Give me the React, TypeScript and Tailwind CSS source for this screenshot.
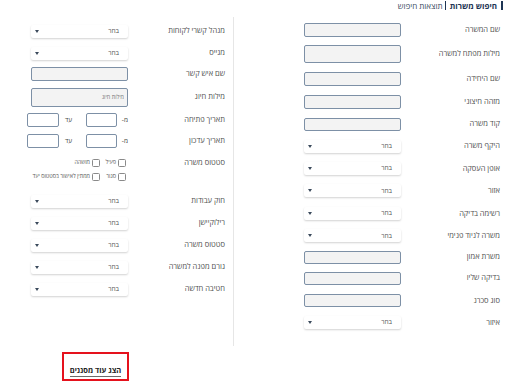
import React from 'react';

const font = { fontFamily: '"Open Sans", "Liberation Sans", "DejaVu Sans", sans-serif' };

function Field({ h = 14, placeholder }: { h?: number; placeholder?: string }) {
  return (
    <input
      readOnly
      placeholder={placeholder}
      style={{ height: h }}
      className="w-[97px] bg-[#f3f3f3] border border-[#7d90a6] rounded-[2px] px-[3px] text-[5.5px] placeholder:text-[#777] outline-none"
    />
  );
}

function Select() {
  return (
    <div className="w-[97px] h-[13px] bg-white rounded-[2px] shadow-[0_1px_2px_rgba(0,0,0,0.18)] flex items-center justify-between pr-[9px] pl-[4px]">
      <span className="text-[6.5px] text-[#555] leading-none">בחר</span>
      <svg width="4" height="3" viewBox="0 0 4 3"><path d="M0 0h4L2 3z" fill="#3b4a5c" /></svg>
    </div>
  );
}

function Row({ label, h = 22.5, children }: { label: string; h?: number; children: React.ReactNode }) {
  return (
    <div className="flex items-center" style={{ height: h }}>
      <div className="w-[99px] text-[7.5px] text-[#4f4f4f] leading-none whitespace-nowrap">{label}</div>
      {children}
    </div>
  );
}

function LRow({ label, h = 22, children }: { label: string; h?: number; children: React.ReactNode }) {
  return (
    <div className="flex items-center" style={{ height: h }}>
      <div className="w-[97px] text-[7.5px] text-[#4f4f4f] leading-none whitespace-nowrap">{label}</div>
      {children}
    </div>
  );
}

function DateRange() {
  return (
    <div className="flex items-center">
      <span className="w-[8px] text-[6.5px] text-[#444]">מ-</span>
      <input readOnly className="mr-[3px] w-[31px] h-[14px] bg-white border border-[#7d90a6] rounded-[2px]" />
      <span className="mr-[14px] w-[9px] text-[6.5px] text-[#444]">עד</span>
      <input readOnly className="mr-[4px] w-[32px] h-[14px] bg-white border border-[#7d90a6] rounded-[2px]" />
    </div>
  );
}

function Check({ label, w }: { label: string; w?: number }) {
  return (
    <div className="flex items-center gap-[2px]" style={w ? { width: w } : undefined}>
      <span className="w-[8px] h-[8px] border border-[#8a8a8a] rounded-[1.5px] bg-white shrink-0" />
      <span className="text-[5.5px] text-[#555] leading-none whitespace-nowrap">{label}</span>
    </div>
  );
}

export default function App() {
  return (
    <div dir="rtl" style={font} className="w-[508px] h-[386px] bg-white overflow-hidden">
      <div className="h-[17px] flex items-start pr-[5px] pt-[1px]">
        <div className="border-r-2 border-[#1e3554] pr-[4px] text-[8px] font-bold text-[#1e3554] leading-[9px]">חיפוש משרות</div>
        <div className="mr-[4px] border-r border-[#1e3554] pr-[2px] text-[8px] text-[#3a4a5e] leading-[9px]">תוצאות חיפוש</div>
      </div>

      <div className="flex">
        <div className="w-[275px] border-l border-[#e6e6e6] pr-[8px] pt-[3px] pb-[12px]">
          <Row label="שם המשרה" h={20}><Field /></Row>
          <Row label="מילות מפתח למשרה" h={27}><Field h={18} /></Row>
          <Row label="שם היחידה" h={24}><Field /></Row>
          <Row label="מזהה חיצוני" h={22}><Field /></Row>
          <Row label="קוד משרה" h={22}><Field h={13} /></Row>
          <Row label="היקף משרה" h={22}><Select /></Row>
          <Row label="אופן העסקה"><Select /></Row>
          <Row label="אזור"><Select /></Row>
          <Row label="רשימה בדיקה"><Select /></Row>
          <Row label="משרה לניוד פנימי"><Select /></Row>
          <Row label="משרת אמון" h={20}><Field h={13} /></Row>
          <Row label="בדיקה שליו" h={22}><Field h={13} /></Row>
          <Row label="סוג סכרנ"><Field h={13} /></Row>
          <Row label="איזור" h={22}><Select /></Row>
        </div>

        <div className="flex-1 pr-[8px] pt-[3px]">
          <LRow label="מנהל קשרי לקוחות"><Select /></LRow>
          <LRow label="מגייס"><Select /></LRow>
          <LRow label="שם איש קשר" h={20}><Field /></LRow>
          <LRow label="מילות חיוג" h={26}><Field h={19} placeholder="מילות חיוג" /></LRow>
          <LRow label="תאריך פתיחה" h={20}><DateRange /></LRow>
          <LRow label="תאריך עדכון" h={22}><DateRange /></LRow>
          <div className="flex h-[38px] pt-[4px]">
            <div className="w-[97px] h-[14px] flex items-center text-[7.5px] text-[#4f4f4f] leading-none">סטטוס משרה</div>
            <div className="pr-[2px]">
              <div className="h-[14px] flex items-center">
                <Check label="פעיל" w={26} />
                <Check label="מושהה" />
              </div>
              <div className="h-[14px] flex items-center">
                <Check label="סגור" w={26} />
                <Check label="ממתין לאישור בסטטוס יעד" />
              </div>
            </div>
          </div>
          <LRow label="חוק עבודות"><Select /></LRow>
          <LRow label="רילוקיישן"><Select /></LRow>
          <LRow label="סטטוס משרה"><Select /></LRow>
          <LRow label="גורם מפנה למשרה"><Select /></LRow>
          <LRow label="חטיבה חדשה"><Select /></LRow>
        </div>
      </div>

      <div dir="ltr" className="pl-[62px] pt-[6px]">
        <div className="w-[67px] h-[29px] border-2 border-[#e5121d] flex justify-center pt-[12px]">
          <span dir="rtl" className="text-[7.5px] font-bold text-[#222] leading-[9px] h-[11px] border-b-[1.5px] border-[#6b6b6b]">הצג עוד מסננים</span>
        </div>
      </div>
    </div>
  );
}
